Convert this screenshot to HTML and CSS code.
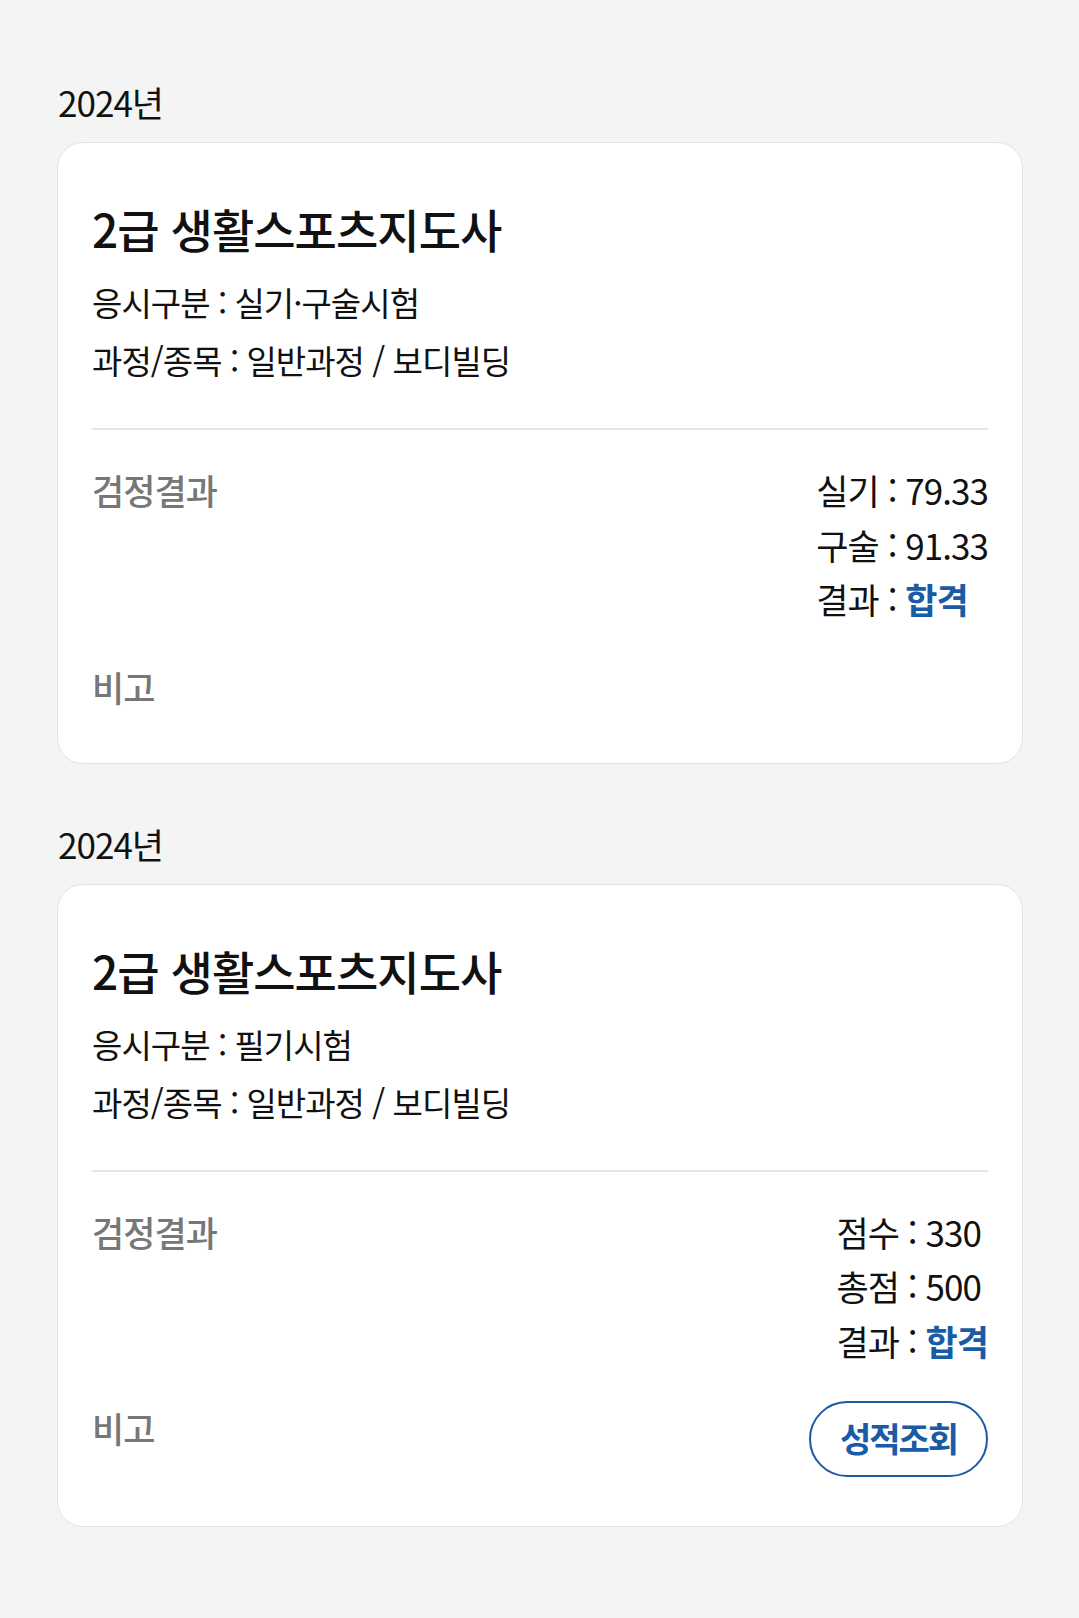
FILE: index.html
```html
<!DOCTYPE html>
<html lang="ko">
<head>
<meta charset="utf-8">
<link rel="stylesheet" href="styles.css">
</head>
<body>
<main class="list">
  <section class="item">
    <h2 class="year">2024년</h2>
    <div class="card">
      <h3 class="title">2급 생활스포츠지도사</h3>
      <p class="info">응시구분 : 실기·구술시험</p>
      <p class="info">과정/종목 : 일반과정 / 보디빌딩</p>
      <div class="divider"></div>
      <div class="row">
        <span class="label">검정결과</span>
        <div class="scores">
          <p class="score">실기 : 79.33</p>
          <p class="score">구술 : 91.33</p>
          <p class="score">결과 : <strong class="pass">합격</strong></p>
        </div>
      </div>
      <div class="row note">
        <span class="label">비고</span>
      </div>
    </div>
  </section>
  <section class="item">
    <h2 class="year">2024년</h2>
    <div class="card">
      <h3 class="title">2급 생활스포츠지도사</h3>
      <p class="info">응시구분 : 필기시험</p>
      <p class="info">과정/종목 : 일반과정 / 보디빌딩</p>
      <div class="divider"></div>
      <div class="row">
        <span class="label">검정결과</span>
        <div class="scores">
          <p class="score">점수 : 330</p>
          <p class="score">총점 : 500</p>
          <p class="score">결과 : <strong class="pass">합격</strong></p>
        </div>
      </div>
      <div class="row note">
        <span class="label">비고</span>
        <button class="btn" type="button">성적조회</button>
      </div>
    </div>
  </section>
</main>
</body>
</html>
```

FILE: styles.css
```css
* { box-sizing: border-box; }
html, body { margin: 0; padding: 0; }
body {
  background: #f4f4f4;
  font-family: "Noto Sans CJK KR", "Noto Sans", sans-serif;
  color: #111;
  letter-spacing: -0.06em;
}
.list {
  padding: 82px 56px 40px 57px;
}
.item + .item { margin-top: 60px; }
.year {
  margin: 0 0 20px 1px;
  font-size: 35px;
  line-height: 40px;
  font-weight: 400;
  color: #111;
}
.card {
  background: #fff;
  border: 1px solid #e3e3e3;
  border-radius: 26px;
  padding: 55px 34px 49px;
}
.title {
  margin: 0 0 15px;
  font-size: 46px;
  line-height: 60px;
  font-weight: 500;
  color: #111;
}
.info {
  margin: 0;
  font-size: 33px;
  line-height: 58px;
  color: #111;
}
.divider {
  height: 2px;
  background: #e6e6e6;
  margin: 39px 0 33px;
}
.row {
  display: flex;
  justify-content: space-between;
  align-items: flex-start;
}
.label {
  font-size: 35px;
  line-height: 54px;
  font-weight: 500;
  color: #777;
}
.scores { text-align: left; }
.score {
  margin: 0;
  font-size: 35px;
  line-height: 54.5px;
  color: #111;
}
.pass {
  color: #1a5ba6;
  font-weight: 700;
}
.note { margin-top: 33px; }
.btn {
  width: 179px;
  height: 76px;
  border: 2px solid #1a5ba6;
  border-radius: 38px;
  background: #fff;
  color: #1a5ba6;
  font-family: inherit;
  font-size: 34px;
  font-weight: 700;
  letter-spacing: -0.06em;
  padding: 0 0 4px;
}
```
